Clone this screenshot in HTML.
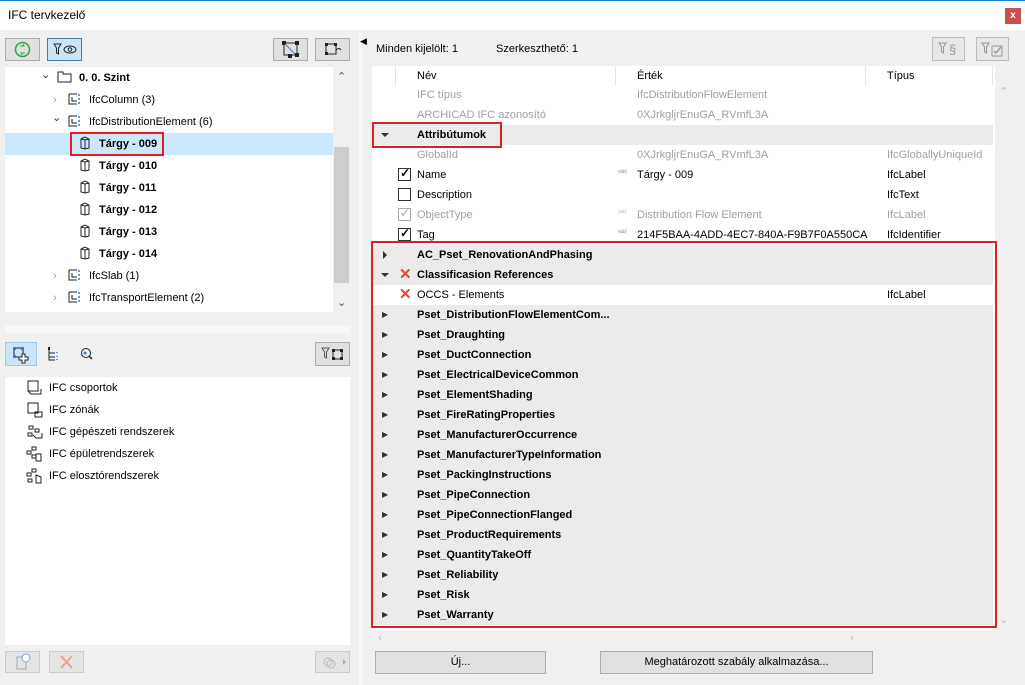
<!DOCTYPE html>
<html><head><meta charset="utf-8"><style>
*{margin:0;padding:0;box-sizing:border-box}
body{width:1025px;height:685px;position:relative;background:#f0f0f0;font-family:"Liberation Sans",sans-serif;font-size:11px;color:#000;overflow:hidden}
.a{position:absolute}
.t{position:absolute;white-space:nowrap;line-height:14px}
.b{font-weight:bold}
.g{color:#a0a0a0}
.btn{position:absolute;background:#e1e1e1;border:1px solid #adadad}
.row{position:absolute;left:373px;width:620px;height:20px}
.gr{background:#ebebeb}
.tri{position:absolute;width:0;height:0}
.tr{border-top:4px solid transparent;border-bottom:4px solid transparent;border-left:4px solid #333}
.td{border-left:4px solid transparent;border-right:4px solid transparent;border-top:4px solid #333}
.cb{position:absolute;width:13px;height:13px;border:1px solid #333;background:#fff}
.x{position:absolute;color:#e8462a;font-size:15px;font-weight:bold;line-height:14px}
</style></head><body>
<div class="a" style="left:0;top:0;width:1025px;height:30px;background:#fff;border-top:1px solid #1883d7"></div>
<div class="t" style="left:8px;top:8px;font-size:12px">IFC tervkezelő</div>
<div class="a" style="left:1005px;top:8px;width:16px;height:16px;background:#c75050;color:#fff;font-size:10px;text-align:center;line-height:15px;font-weight:bold">x</div>

<div class="btn" style="left:5px;top:38px;width:35px;height:23px"><svg width="33" height="21"><circle cx="16.5" cy="10.5" r="7" fill="none" stroke="#2aa84a" stroke-width="1.5"/><path d="M14 7l4 0-1-2M19 14l-4 0 1 2" stroke="#2aa84a" fill="none"/></svg></div>
<div class="btn" style="left:47px;top:38px;width:35px;height:23px;background:#cce4f7;border-color:#3c7fb1"><svg width="33" height="21"><path d="M6 5h7l-2.5 4v6l-2-1V9z" fill="none" stroke="#222"/><ellipse cx="22" cy="10.5" rx="6" ry="3.5" fill="none" stroke="#222"/><circle cx="22" cy="10.5" r="1.8" fill="none" stroke="#222"/></svg></div>
<div class="btn" style="left:273px;top:38px;width:35px;height:23px"><svg width="33" height="21"><rect x="10" y="4" width="13" height="12" fill="none" stroke="#222"/><rect x="8" y="2" width="4" height="4" fill="#222"/><rect x="21" y="2" width="4" height="4" fill="#222"/><rect x="21" y="14" width="4" height="4" fill="#222"/><rect x="14" y="15" width="4" height="4" fill="#222"/><path d="M11 5l10 10" stroke="#3c7fd0"/></svg></div>
<div class="btn" style="left:315px;top:38px;width:35px;height:23px"><svg width="33" height="21"><rect x="10" y="5" width="10" height="10" fill="none" stroke="#222"/><rect x="9" y="4" width="3" height="3" fill="#222"/><rect x="18" y="4" width="3" height="3" fill="#222"/><rect x="9" y="13" width="3" height="3" fill="#222"/><path d="M20 11q3-3 5 0" stroke="#222" fill="none"/></svg></div>

<div class="a" style="left:5px;top:67px;width:328px;height:245px;background:#fff"></div>
<div class="a" style="left:333px;top:67px;width:17px;height:245px;background:#f0f0f0"></div>
<div class="a" style="left:334px;top:147px;width:15px;height:136px;background:#cdcdcd"></div>
<div class="t" style="left:337px;top:70px;color:#555">&#8963;</div>
<div class="t" style="left:337px;top:296px;color:#555">&#8964;</div>
<div class="a" style="left:5px;top:133px;width:328px;height:22px;background:#cce8ff"></div>
<div class="a" style="left:70px;top:132px;width:94px;height:24px;border:2px solid #e02020"></div>
<div class="t" style="left:41px;top:68px;color:#333">&#8964;</div>
<svg class="a" style="left:57px;top:71px" width="16" height="12"><path d="M1 1h5v2h8v8H1z" fill="none" stroke="#222"/></svg>
<div class="t b" style="left:79px;top:71px">0. 0. Szint</div>
<div class="t" style="left:53px;top:93px;color:#999">&#8250;</div>
<div class="t" style="left:52px;top:111px;color:#333">&#8964;</div>
<div class="t" style="left:53px;top:269px;color:#999">&#8250;</div>
<div class="t" style="left:53px;top:291px;color:#999">&#8250;</div>
<svg class="a" style="left:68px;top:93px" width="14" height="12"><path d="M1 1v10h8M1 1h8M4 4v4h5" fill="none" stroke="#222"/><path d="M11 1v2M11 5v2M11 9v2" stroke="#2f7fd8" stroke-width="1.5"/></svg>
<svg class="a" style="left:68px;top:115px" width="14" height="12"><path d="M1 1v10h8M1 1h8M4 4v4h5" fill="none" stroke="#222"/><path d="M11 1v2M11 5v2M11 9v2" stroke="#2f7fd8" stroke-width="1.5"/></svg>
<svg class="a" style="left:68px;top:269px" width="14" height="12"><path d="M1 1v10h8M1 1h8M4 4v4h5" fill="none" stroke="#222"/><path d="M11 1v2M11 5v2M11 9v2" stroke="#2f7fd8" stroke-width="1.5"/></svg>
<svg class="a" style="left:68px;top:291px" width="14" height="12"><path d="M1 1v10h8M1 1h8M4 4v4h5" fill="none" stroke="#222"/><path d="M11 1v2M11 5v2M11 9v2" stroke="#2f7fd8" stroke-width="1.5"/></svg>
<div class="t" style="left:89px;top:93px">IfcColumn (3)</div>
<div class="t" style="left:89px;top:115px">IfcDistributionElement (6)</div>
<div class="t" style="left:89px;top:269px">IfcSlab (1)</div>
<div class="t" style="left:89px;top:291px">IfcTransportElement (2)</div>
<svg class="a" style="left:79px;top:136px" width="12" height="14"><path d="M2 3l4-2 4 2v9l-4 1-4-1zM6 4v9M2 3l4 1 4-1" fill="none" stroke="#222"/></svg>
<svg class="a" style="left:79px;top:158px" width="12" height="14"><path d="M2 3l4-2 4 2v9l-4 1-4-1zM6 4v9M2 3l4 1 4-1" fill="none" stroke="#222"/></svg>
<svg class="a" style="left:79px;top:180px" width="12" height="14"><path d="M2 3l4-2 4 2v9l-4 1-4-1zM6 4v9M2 3l4 1 4-1" fill="none" stroke="#222"/></svg>
<svg class="a" style="left:79px;top:202px" width="12" height="14"><path d="M2 3l4-2 4 2v9l-4 1-4-1zM6 4v9M2 3l4 1 4-1" fill="none" stroke="#222"/></svg>
<svg class="a" style="left:79px;top:224px" width="12" height="14"><path d="M2 3l4-2 4 2v9l-4 1-4-1zM6 4v9M2 3l4 1 4-1" fill="none" stroke="#222"/></svg>
<svg class="a" style="left:79px;top:246px" width="12" height="14"><path d="M2 3l4-2 4 2v9l-4 1-4-1zM6 4v9M2 3l4 1 4-1" fill="none" stroke="#222"/></svg>
<div class="t b" style="left:99px;top:137px">Tárgy - 009</div>
<div class="t b" style="left:99px;top:159px">Tárgy - 010</div>
<div class="t b" style="left:99px;top:181px">Tárgy - 011</div>
<div class="t b" style="left:99px;top:203px">Tárgy - 012</div>
<div class="t b" style="left:99px;top:225px">Tárgy - 013</div>
<div class="t b" style="left:99px;top:247px">Tárgy - 014</div>

<div class="a" style="left:5px;top:326px;width:345px;height:7px;background:#f7f7f7"></div>
<div class="a" style="left:359px;top:30px;width:3px;height:655px;background:#f7f7f7"></div>
<div class="t" style="left:360px;top:34px;font-size:9px">&#9664;</div>

<div class="a" style="left:5px;top:342px;width:32px;height:24px;background:#cce4f7;border:1px solid #99c9ef"></div>
<svg class="a" style="left:12px;top:346px" width="20" height="18"><rect x="2" y="2" width="9" height="9" fill="none" stroke="#222"/><rect x="1" y="1" width="3" height="3" fill="#2f7fd8"/><rect x="9" y="1" width="3" height="3" fill="#2f7fd8"/><rect x="1" y="9" width="3" height="3" fill="#2f7fd8"/><path d="M10 8h3v3h3v3h-3v3h-3v-3H7v-3h3z" fill="#fff" stroke="#222"/></svg>
<svg class="a" style="left:47px;top:346px" width="14" height="16"><path d="M2 2v12h6M2 7h6M2 11h6" fill="none" stroke="#222"/><rect x="1" y="1" width="2" height="3" fill="#222"/><path d="M10 6v1M10 10v1M10 13v1" stroke="#2f7fd8" stroke-width="1.5"/></svg>
<svg class="a" style="left:79px;top:346px" width="16" height="16"><circle cx="7" cy="7" r="4.5" fill="none" stroke="#222"/><circle cx="6" cy="7" r="1.5" fill="#2f7fd8"/><path d="M10 10l3 3" stroke="#222" stroke-width="1.5"/></svg>
<div class="btn" style="left:315px;top:342px;width:35px;height:24px"><svg width="33" height="22"><path d="M6 5h7l-2.5 4v6l-2-1V9z" fill="none" stroke="#555"/><rect x="17" y="7" width="9" height="9" fill="none" stroke="#222"/><rect x="16" y="6" width="3" height="3" fill="#222"/><rect x="24" y="6" width="3" height="3" fill="#222"/><rect x="16" y="14" width="3" height="3" fill="#222"/><rect x="24" y="14" width="3" height="3" fill="#222"/></svg></div>
<div class="a" style="left:5px;top:377px;width:345px;height:268px;background:#fff"></div>
<svg class="a" style="left:26px;top:380px" width="18" height="16"><rect x="2" y="1" width="10" height="10" fill="none" stroke="#222"/><path d="M2 11l3 3h10v-5" fill="none" stroke="#222"/></svg>
<svg class="a" style="left:26px;top:402px" width="18" height="16"><rect x="2" y="1" width="10" height="10" fill="none" stroke="#222"/><rect x="9" y="10" width="7" height="5" fill="none" stroke="#222"/></svg>
<svg class="a" style="left:26px;top:424px" width="18" height="16"><path d="M3 2h4v3H3zM9 5h4v3H9zM2 9h4v3H2zM7 11l3 3h6v-5" fill="none" stroke="#222"/></svg>
<svg class="a" style="left:26px;top:446px" width="18" height="16"><path d="M6 1h4v3H6zM1 5h4v3H1zM6 9h4v3H6zM10 8h5v7h-5z" fill="none" stroke="#222"/></svg>
<svg class="a" style="left:26px;top:468px" width="18" height="16"><path d="M6 1h4v3H6zM1 5h4v3H1zM2 11h4v3H2zM10 7l5 2v6h-5z" fill="none" stroke="#222"/></svg>
<div class="t" style="left:49px;top:381px">IFC csoportok</div>
<div class="t" style="left:49px;top:403px">IFC zónák</div>
<div class="t" style="left:49px;top:425px">IFC gépészeti rendszerek</div>
<div class="t" style="left:49px;top:447px">IFC épületrendszerek</div>
<div class="t" style="left:49px;top:469px">IFC elosztórendszerek</div>
<div class="btn" style="left:5px;top:651px;width:35px;height:22px;border-color:#ccc;background:#e5e5e5"><svg width="33" height="20"><rect x="11" y="5" width="9" height="12" fill="none" stroke="#aaa"/><circle cx="20" cy="6" r="4" fill="#fff" stroke="#7aa6e0"/></svg></div>
<div class="btn" style="left:49px;top:651px;width:35px;height:22px;border-color:#ccc;background:#e5e5e5"><svg width="33" height="20"><path d="M11 4l11 12M22 4L11 16" stroke="#f0a090" stroke-width="2"/></svg></div>
<div class="btn" style="left:315px;top:651px;width:35px;height:22px;border-color:#ccc;background:#e5e5e5"><svg width="33" height="20"><circle cx="12" cy="10" r="4" fill="none" stroke="#bbb"/><circle cx="15" cy="12" r="4" fill="none" stroke="#bbb"/><path d="M27 7l3 3-3 3z" fill="#aaa"/></svg></div>

<div class="t" style="left:376px;top:42px">Minden kijelölt: 1</div>
<div class="t" style="left:496px;top:42px">Szerkeszthető: 1</div>
<div class="btn" style="left:932px;top:37px;width:33px;height:24px;border-color:#bbb;background:#e8e8e8"><svg width="31" height="22"><path d="M6 5h7l-2.5 4v6l-2-1V9z" fill="none" stroke="#999"/><text x="16" y="16" fill="#999" font-size="13" font-family="Liberation Sans">§</text></svg></div>
<div class="btn" style="left:976px;top:37px;width:33px;height:24px;border-color:#bbb;background:#e8e8e8"><svg width="31" height="22"><path d="M5 5h7l-2.5 4v6l-2-1V9z" fill="none" stroke="#999"/><rect x="15" y="8" width="10" height="10" fill="none" stroke="#999"/><path d="M17 13l2 2 5-6" fill="none" stroke="#999" stroke-width="1.5"/></svg></div>

<div class="a" style="left:372px;top:66px;width:623px;height:564px;background:#fff"></div>
<div class="a" style="left:395px;top:66px;width:1px;height:20px;background:#e5e5e5"></div>
<div class="a" style="left:615px;top:66px;width:1px;height:20px;background:#e5e5e5"></div>
<div class="a" style="left:865px;top:66px;width:1px;height:20px;background:#e5e5e5"></div>
<div class="a" style="left:992px;top:66px;width:1px;height:20px;background:#e5e5e5"></div>
<div class="t" style="left:417px;top:69px">Név</div>
<div class="t" style="left:637px;top:69px">Érték</div>
<div class="t" style="left:887px;top:69px">Típus</div>
<div class="t" style="left:999px;top:85px;color:#bbb">&#8963;</div>
<div class="t" style="left:999px;top:613px;color:#bbb">&#8964;</div>
<div class="t" style="left:378px;top:631px;color:#bbb">&#8249;</div>
<div class="t" style="left:850px;top:631px;color:#bbb">&#8250;</div>

<div class="t g" style="left:417px;top:88px">IFC típus</div><div class="t g" style="left:637px;top:88px">IfcDistributionFlowElement</div>
<div class="t g" style="left:417px;top:108px">ARCHICAD IFC azonosító</div><div class="t g" style="left:637px;top:108px">0XJrkgljrEnuGA_RVmfL3A</div>
<div class="row gr" style="top:125px"></div><div class="tri td" style="left:381px;top:133px"></div>
<div class="t b" style="left:417px;top:128px">Attribútumok</div>
<div class="a" style="left:372px;top:122px;width:130px;height:26px;border:2px solid #e02020"></div>
<div class="t g" style="left:417px;top:148px">GlobalId</div><div class="t g" style="left:637px;top:148px">0XJrkgljrEnuGA_RVmfL3A</div><div class="t g" style="left:887px;top:148px">IfcGloballyUniqueId</div>
<div class="cb" style="left:398px;top:168px"></div><div class="t b" style="left:400px;top:166px;font-size:12px">&#10003;</div>
<div class="t" style="left:417px;top:168px">Name</div><div class="t" style="left:618px;top:167px;color:#888">&#9091;</div><div class="t" style="left:637px;top:168px">Tárgy - 009</div><div class="t" style="left:887px;top:168px">IfcLabel</div>
<div class="cb" style="left:398px;top:188px"></div>
<div class="t" style="left:417px;top:188px">Description</div><div class="t" style="left:887px;top:188px">IfcText</div>
<div class="cb" style="left:398px;top:208px;border-color:#aaa"></div><div class="t" style="left:400px;top:206px;font-size:12px;color:#aaa">&#10003;</div>
<div class="t g" style="left:417px;top:208px">ObjectType</div><div class="t" style="left:618px;top:207px;color:#bbb">&#9091;</div><div class="t g" style="left:637px;top:208px">Distribution Flow Element</div><div class="t g" style="left:887px;top:208px">IfcLabel</div>
<div class="cb" style="left:398px;top:228px"></div><div class="t b" style="left:400px;top:226px;font-size:12px">&#10003;</div>
<div class="t" style="left:417px;top:228px">Tag</div><div class="t" style="left:618px;top:227px;color:#888">&#9091;</div><div class="t" style="left:637px;top:228px">214F5BAA-4ADD-4EC7-840A-F9B7F0A550CA</div><div class="t" style="left:887px;top:228px">IfcIdentifier</div>

<div class="row gr" style="top:245px;height:40px"></div>
<div class="tri tr" style="left:383px;top:251px"></div><div class="t b" style="left:417px;top:248px">AC_Pset_RenovationAndPhasing</div>
<div class="tri td" style="left:381px;top:273px"></div><div class="x" style="left:399px;top:268px">&#10005;</div><div class="t b" style="left:417px;top:268px">Classificasion References</div>
<div class="x" style="left:399px;top:288px">&#10005;</div><div class="t" style="left:417px;top:288px">OCCS - Elements</div><div class="t" style="left:887px;top:288px">IfcLabel</div>
<div class="row gr" style="top:305px;height:320px"></div>
<div class="t b" style="left:417px;top:305px;line-height:20px">Pset_DistributionFlowElementCom...<br>Pset_Draughting<br>Pset_DuctConnection<br>Pset_ElectricalDeviceCommon<br>Pset_ElementShading<br>Pset_FireRatingProperties<br>Pset_ManufacturerOccurrence<br>Pset_ManufacturerTypeInformation<br>Pset_PackingInstructions<br>Pset_PipeConnection<br>Pset_PipeConnectionFlanged<br>Pset_ProductRequirements<br>Pset_QuantityTakeOff<br>Pset_Reliability<br>Pset_Risk<br>Pset_Warranty</div>
<div class="t" style="left:382px;top:305px;line-height:20px;font-size:8px;color:#333">&#9654;<br>&#9654;<br>&#9654;<br>&#9654;<br>&#9654;<br>&#9654;<br>&#9654;<br>&#9654;<br>&#9654;<br>&#9654;<br>&#9654;<br>&#9654;<br>&#9654;<br>&#9654;<br>&#9654;<br>&#9654;</div>
<div class="a" style="left:371px;top:241px;width:626px;height:387px;border:2px solid #e02020"></div>

<div class="btn" style="left:375px;top:651px;width:171px;height:23px;text-align:center;line-height:21px">Új...</div>
<div class="btn" style="left:600px;top:651px;width:273px;height:23px;text-align:center;line-height:21px">Meghatározott szabály alkalmazása...</div>
</body></html>
